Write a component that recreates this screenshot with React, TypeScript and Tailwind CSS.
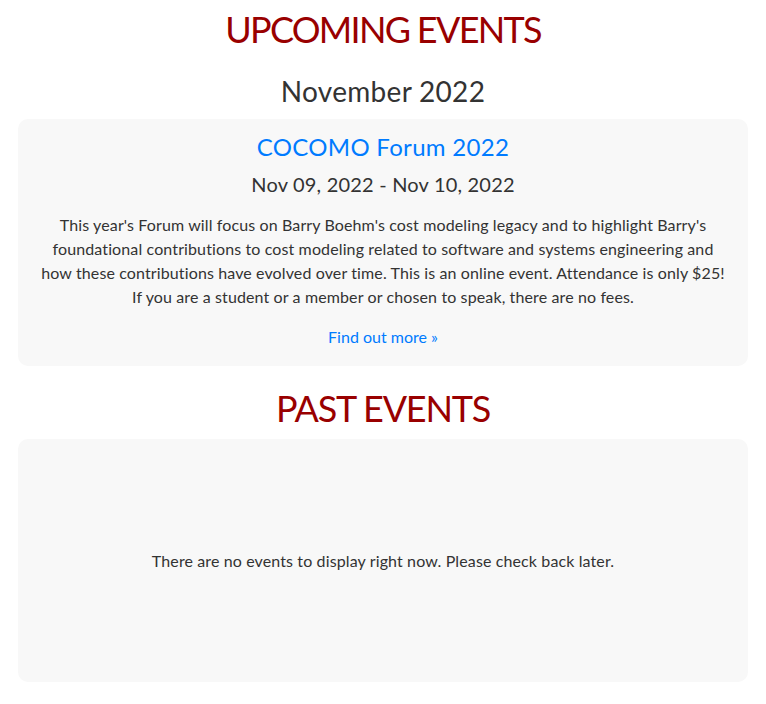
const font = { fontFamily: "Lato, 'Open Sans', sans-serif" }

export default function App() {
    return (
        <div className="min-h-[704px] bg-white px-[18px] text-center text-[#333333]" style={font}>
            <h1 className="pt-[8px] text-[36px] leading-[43px] tracking-[-1.7px] text-[#990000]">UPCOMING EVENTS</h1>
            <h2 className="mt-[23px] text-[28px] leading-[34px] tracking-[0.3px]">November 2022</h2>

            <div className="mt-[11px] rounded-[10px] bg-[#f8f8f8] px-[19px] pt-[13px] pb-[17px]">
                <h3 className="text-[24px] leading-[30px] tracking-[0.3px] text-[#007bff]">COCOMO Forum 2022</h3>
                <h4 className="mt-[10px] text-[20px] leading-[24px] tracking-[0.2px]">Nov 09, 2022 - Nov 10, 2022</h4>
                <p className="mt-[17px] text-[16px] leading-[24px] tracking-[0.12px]">
                    This year's Forum will focus on Barry Boehm's cost modeling legacy and to highlight Barry's
                    foundational contributions to cost modeling related to software and systems engineering and
                    how these contributions have evolved over time. This is an online event. Attendance is only $25!
                    If you are a student or a member or chosen to speak, there are no fees.
                </p>
                <a href="#" className="mt-[16px] inline-block text-[16px] leading-[24px] text-[#007bff]">
                    Find out more »
                </a>
            </div>

            <h1 className="mt-[21px] text-[36px] leading-[43px] tracking-[-1.2px] text-[#990000]">PAST EVENTS</h1>

            <div className="mt-[9px] flex h-[243px] items-center justify-center rounded-[10px] bg-[#f8f8f8]">
                <p className="text-[16px] leading-[24px] tracking-[0.12px]">There are no events to display right now. Please check back later.</p>
            </div>
        </div>
    )
}
